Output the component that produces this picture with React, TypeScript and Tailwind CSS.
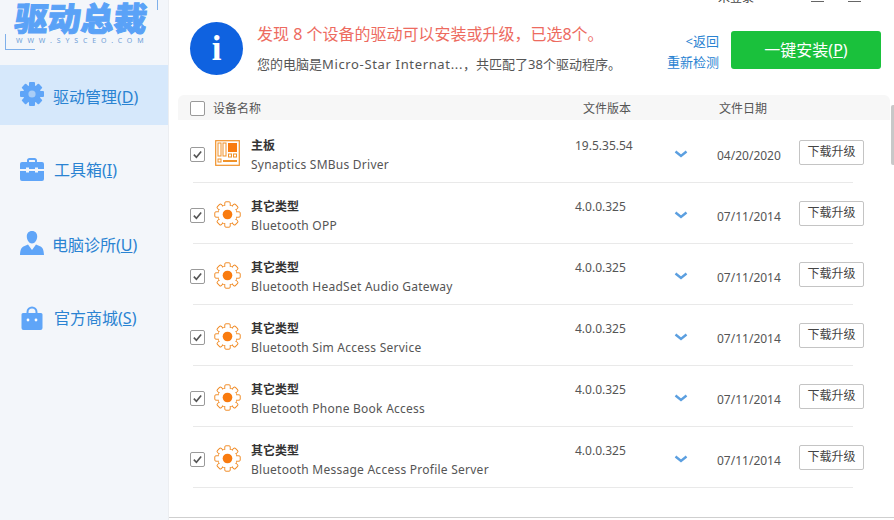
const cjk = "font-['Noto_Sans','Noto_Sans_CJK_SC',sans-serif]";

function Gear({ className = "" }: { className?: string }) {
  const teeth = Array.from({ length: 8 }, (_, i) => i * 45);
  return (
    <svg viewBox="0 0 28 28" className={className}>
      <g fill="#fff" stroke="#f08a24" strokeWidth="1" strokeLinejoin="round">
        {teeth.map((a) => (
          <rect key={a} x="11.2" y="0.8" width="5.6" height="5" rx="1.2" transform={`rotate(${a} 14 14)`} />
        ))}
        <circle cx="14" cy="14" r="10" />
      </g>
      <circle cx="14" cy="14" r="9.600" fill="#fff" />
      <g fill="#fff">
        {teeth.map((a) => (
          <rect key={a} x="11.9" y="3" width="4.2" height="3.200" transform={`rotate(${a} 14 14)`} />
        ))}
      </g>
      <circle cx="14" cy="14" r="5" fill="#f97b0f" />
    </svg>
  );
}

function Board() {
  return (
    <svg viewBox="0 0 26 26" className="w-[26px] h-[26px]">
      <rect x="0.7" y="0.7" width="23.6" height="24.6" fill="#fff" stroke="#f0922a" strokeWidth="1.2" />
      <rect x="3" y="3" width="3" height="13" fill="none" stroke="#f0922a" />
      <rect x="8" y="3" width="3" height="13" fill="none" stroke="#f0922a" />
      <rect x="13" y="3" width="9" height="9" fill="#f97b0f" />
      <rect x="13.5" y="14" width="3" height="3" fill="none" stroke="#f0922a" />
      <rect x="18.5" y="14" width="3" height="3" fill="none" stroke="#f0922a" />
      <rect x="3" y="19" width="3" height="3" fill="none" stroke="#f0922a" />
      <rect x="8" y="20" width="14" height="2" fill="#f0922a" />
    </svg>
  );
}

function SideGear() {
  const teeth = Array.from({ length: 8 }, (_, i) => i * 45);
  return (
    <svg viewBox="0 0 24 24" className="w-6 h-6">
      {teeth.map((a) => (
        <rect key={a} x="9" y="0" width="6" height="6" rx="1" fill="#5fa5f8" transform={`rotate(${a} 12 12)`} />
      ))}
      <circle cx="12" cy="12" r="9" fill="#5fa5f8" />
      <circle cx="12" cy="12" r="3.600" fill="#a9cdf6" />
    </svg>
  );
}

function Toolbox() {
  return (
    <svg viewBox="0 0 24 24" className="w-6 h-6">
      <path d="M7 6V3.500C7 2 8 1 9.500 1h5C16 1 17 2 17 3.500V6h-2V3.500c0-.4-.2-.6-.6-.6H9.600c-.4 0-.6.2-.6.6V6z" fill="#5fa5f8" />
      <path d="M2 5h20a2 2 0 0 1 2 2v5h-6v-1.500h-3V12H9v-1.500H6V12H0V7a2 2 0 0 1 2-2z" fill="#5fa5f8" />
      <path d="M0 14h6v1.500h3V14h6v1.500h3V14h6v8a2 2 0 0 1-2 2H2a2 2 0 0 1-2-2z" fill="#5fa5f8" />
    </svg>
  );
}

function Person() {
  return (
    <svg viewBox="0 0 24 24" className="w-6 h-6">
      <path d="M12 0c3.500 0 5.200 2.400 5.200 5.500 0 3.400-2.300 7-5.200 7s-5.200-3.600-5.200-7C6.800 2.400 8.500 0 12 0z" fill="#5fa5f8" />
      <path d="M0 24c.3-5 1-7.500 4-8.800l4-1.700 4 5.500 4-5.500 4 1.700c3 1.300 3.700 3.800 4 8.800z" fill="#5fa5f8" />
    </svg>
  );
}

function Bag() {
  return (
    <svg viewBox="0 0 24 24" className="w-6 h-6">
      <path d="M6.500 7V6a5.500 5.500 0 0 1 11 0v1h-2V6a3.500 3.500 0 0 0-7 0v1z" fill="#5fa5f8" />
      <path d="M3 7h18a1.500 1.500 0 0 1 1.500 1.500V22a2 2 0 0 1-2 2h-17a2 2 0 0 1-2-2V8.500A1.500 1.500 0 0 1 3 7z" fill="#5fa5f8" />
      <circle cx="8" cy="14" r="1.400" fill="#fff" />
      <circle cx="16" cy="14" r="1.400" fill="#fff" />
    </svg>
  );
}

function Check({ checked }: { checked: boolean }) {
  return (
    <span className="w-[15px] h-[15px] rounded-[2px] border border-[#9a9a9a] bg-white flex items-center justify-center shrink-0">
      {checked && (
        <svg viewBox="0 0 12 12" className="w-[11px] h-[11px]">
          <path d="M2 6.200 4.800 9 10 2.800" fill="none" stroke="#555" strokeWidth="1.800" />
        </svg>
      )}
    </span>
  );
}

const navItems = [
  { icon: <SideGear />, label: "驱动管理", key: "D", cls: "h-[60px] bg-[#d6e8fb] mb-[8px]", text: "mt-[3px]", gap: "gap-[9px]", ic: "-mt-[2px]" },
  { icon: <Toolbox />, label: "工具箱", key: "I", cls: "h-[74px]", text: "", gap: "gap-[10px]", ic: "-mt-[2px]" },
  { icon: <Person />, label: "电脑诊所", key: "U", cls: "h-[74px]", text: "mt-[1px]", gap: "gap-[8px]", ic: "-mt-[2px]" },
  { icon: <Bag />, label: "官方商城", key: "S", cls: "h-[74px]", text: "", gap: "gap-[10px]", ic: "" },
];

const rows = [
  { type: "主板", name: "Synaptics SMBus Driver", ver: "19.5.35.54", date: "04/20/2020", board: true },
  { type: "其它类型", name: "Bluetooth OPP", ver: "4.0.0.325", date: "07/11/2014" },
  { type: "其它类型", name: "Bluetooth HeadSet Audio Gateway", ver: "4.0.0.325", date: "07/11/2014" },
  { type: "其它类型", name: "Bluetooth Sim Access Service", ver: "4.0.0.325", date: "07/11/2014" },
  { type: "其它类型", name: "Bluetooth Phone Book Access", ver: "4.0.0.325", date: "07/11/2014" },
  { type: "其它类型", name: "Bluetooth Message Access Profile Server", ver: "4.0.0.325", date: "07/11/2014" },
];

export default function App() {
  return (
    <div className={`w-[894px] h-[520px] flex overflow-hidden bg-white ${cjk}`}>
      <aside className="w-[169px] shrink-0 bg-[#f3f6fa] border-r border-[#eceef1] flex flex-col">
        <div className="h-[65px] relative">
          <div className="absolute left-[5px] top-[34px] w-[30px] h-[16px] border-l border-b border-[#7fb0ea]" />
          <div className="absolute left-[157px] top-0 h-[10px] border-l border-[#7fb0ea]" />
          <div className="absolute left-[15px] top-0 text-[33px] leading-[38px] font-black -skew-x-6 text-[#5aa2f7] [-webkit-text-stroke:1px_#5aa2f7] whitespace-nowrap">驱动总裁</div>
          <div className="absolute left-[16px] top-[36px] text-[7px] leading-[9px] text-[#6f9fd8] tracking-[4.9px] whitespace-nowrap">WWW.SYSCEO.COM</div>
        </div>
        {navItems.map((n) => (
          <div key={n.key} className={`${n.cls} pl-[20px] flex items-center ${n.gap} text-[16px] text-[#2a83d2]`}>
            <span className={n.ic}>{n.icon}</span>
            <span className={`whitespace-nowrap ${n.text}`}>
              {n.label}(<span className="underline">{n.key}</span>)
            </span>
          </div>
        ))}
      </aside>

      <main className="flex-1 relative flex flex-col min-w-0">
        <div className="absolute left-[549px] top-[-10px] flex items-center text-[12px] leading-[16px] text-[#444] whitespace-nowrap">
          <span className="w-[66px]">未登录</span>
          <svg viewBox="0 0 8 4" className="w-[8px] h-[4px] mt-[-2px]">
            <path d="M0 4 4 0l4 4" fill="none" stroke="#777" />
          </svg>
          <span className="w-[13px] border-t border-[#666] ml-[19px] mt-[6px]" />
          <span className="w-[13px] border-t border-[#666] ml-[24px] mt-[6px]" />
          <svg viewBox="0 0 6 4" className="w-[6px] h-[4px] ml-[25px] mt-[-2px]">
            <path d="M0 0l6 4" fill="none" stroke="#777" />
          </svg>
        </div>

        <div className="h-[95px] shrink-0 pl-[21px] pr-[13px] pt-[22px] flex items-start">
          <div className="w-[53px] h-[53px] rounded-full bg-[#0f62e0] flex items-center justify-center shrink-0 text-white text-[35px] leading-none font-bold font-['Liberation_Serif',serif]">i</div>
          <div className="ml-[14px] flex-1 min-w-0 pt-[2px]">
            <div className="text-[16px] leading-[20px] text-[#ed6b5f] whitespace-nowrap">发现 8 个设备的驱动可以安装或升级，已选8个。</div>
            <div className="mt-[11px] text-[13px] leading-[18px] text-[#555] whitespace-nowrap">
              您的电脑是<span className="tracking-[0.65px]">Micro-Star Internat...</span>，共匹配了38个驱动程序。
            </div>
          </div>
          <div className="w-[56px] mr-[12px] shrink-0 text-[13px] text-[#2a83d2] text-right leading-[21px] mt-[9px]">
            <div>&lt;返回</div>
            <div>重新检测</div>
          </div>
          <button className="w-[150px] h-[38px] mt-[9px] shrink-0 bg-[#1ac13c] rounded-[3px] text-white text-[16px]">
            一键安装(<span className="underline">P</span>)
          </button>
        </div>

        <div className="flex-1 flex min-h-0 relative">
          <div className="flex-1 min-w-0 flex flex-col pl-[9px]">
            <div className="h-[25px] mb-[2px] pt-[2px] bg-[#f7f7f7] rounded-t-[6px] flex items-center text-[12px] text-[#555] pl-[12px] shrink-0">
              <Check checked={false} />
              <span className="ml-[8px] w-[370px]">设备名称</span>
              <span className="w-[136px]">文件版本</span>
              <span>文件日期</span>
            </div>
            {rows.map((r, i) => (
              <div key={i} className="shrink-0">
                <div className="h-[60px] pl-[12px] flex items-center text-[12px] text-[#555]">
                  <span className="mt-[4px]"><Check checked /></span>
                  <div className="ml-[9px] w-[27px] flex justify-center shrink-0 mt-[2px]">
                    {r.board ? <Board /> : <Gear className="w-[27px] h-[27px]" />}
                  </div>
                  <div className="ml-[10px] w-[324px] shrink-0 self-start pt-[15px]">
                    <div className="font-bold text-[#333] leading-[17px]">{r.type}</div>
                    <div className="mt-[2px] leading-[18px] tracking-[0.25px] whitespace-nowrap">{r.name}</div>
                  </div>
                  <div className="w-[99px] shrink-0 self-start pt-[16px] leading-[16px]">{r.ver}</div>
                  <svg viewBox="0 0 14 8" className="w-[14px] h-[8px] shrink-0 mt-[3px]">
                    <path d="M1.500 1.500 7 6l5.500-4.500" fill="none" stroke="#5b9fe0" strokeWidth="2.400" />
                  </svg>
                  <div className="ml-[29px] w-[82px] shrink-0 mt-[7px]">{r.date}</div>
                  <button className="w-[65px] h-[25px] shrink-0 border border-[#c4c4c4] rounded-[2px] bg-white text-[12px] text-[#444]">下载升级</button>
                </div>
                <div className="h-px ml-[15px] w-[660px] bg-[#e9e9e9]" />
              </div>
            ))}
          </div>
          <div className="w-[4px] shrink-0 relative">
            <div className="absolute right-0 top-[10px] w-[3px] h-[60px] bg-[#c8c8c8] rounded-l-[2px]" />
          </div>
          <div className="absolute left-0 right-0 bottom-[2px] border-b border-[#cfcfcf]" />
        </div>
      </main>
    </div>
  );
}
